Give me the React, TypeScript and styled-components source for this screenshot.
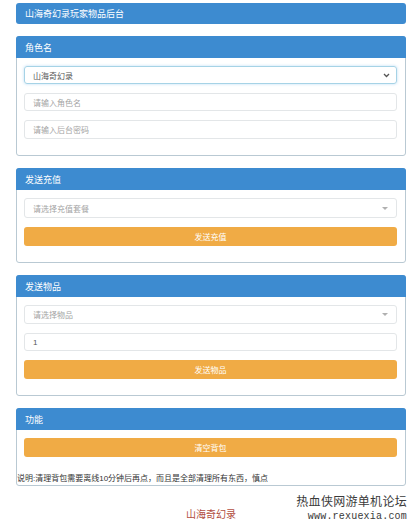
import styled, { createGlobalStyle } from 'styled-components';

const GlobalStyle = createGlobalStyle`
    html, body {
        margin: 0;
        padding: 0;
        background: #fff;
    }
    body {
        font-family: "Liberation Sans", "Noto Sans CJK SC", sans-serif;
        color: #333;
    }
`;

const Page = styled.div`
    position: relative;
    width: 415px;
    height: 525px;
    padding: 3px 9px 0 16px;
    box-sizing: border-box;
    overflow: hidden;
`;

const TopBar = styled.div`
    height: 21px;
    background: #3d8bd0;
    border-radius: 3px;
    color: #fff;
    font-size: 9px;
    display: flex;
    align-items: center;
    padding-left: 9px;
`;

const Panel = styled.div`
    margin-top: 12px;
    border: 1px solid #b9c9d3;
    border-radius: 3px;
    background: #fff;
`;

const PanelHeader = styled.div`
    height: 22px;
    margin: -1px -1px 0;
    background: #3d8bd0;
    border-radius: 3px 3px 0 0;
    color: #fff;
    font-size: 9px;
    display: flex;
    align-items: center;
    padding-left: 9px;
`;

const PanelBody = styled.div<{ $bottom?: number }>`
    display: flex;
    flex-direction: column;
    gap: 9px;
    padding: 8px 8px ${(p) => p.$bottom ?? 16}px 7px;
`;

const Field = styled.div<{ $focus?: boolean; $muted?: boolean; $h?: number }>`
    height: ${(p) => p.$h ?? 18}px;
    box-sizing: border-box;
    border: 1px solid ${(p) => (p.$focus ? '#a6d3e6' : '#e3e6e8')};
    box-shadow: ${(p) => (p.$focus ? '0 0 3px rgba(102, 175, 233, 0.45)' : 'none')};
    border-radius: 3px;
    display: flex;
    align-items: center;
    justify-content: space-between;
    padding: 0 6px 0 8px;
    font-size: 8px;
    color: ${(p) => (p.$muted ? '#a4a4a4' : '#555')};
`;

const Caret = styled.span`
    width: 0;
    height: 0;
    border-left: 3px solid transparent;
    border-right: 3px solid transparent;
    border-top: 3px solid #b0b0b0;
    margin-right: 2px;
`;

const Button = styled.div`
    height: 19px;
    border-radius: 3px;
    background: #f0ab45;
    color: #fff;
    font-size: 8px;
    display: flex;
    align-items: center;
    justify-content: center;
`;

const Note = styled.div`
    font-size: 8px;
    color: #333;
    margin: 6px -8px 0 -7px;
`;

const Footer = styled.div`
    margin-top: 20px;
    text-align: center;
    font-size: 10px;
    color: #b24d3f;
`;

const Watermark = styled.div`
    position: absolute;
    right: 8px;
    bottom: 3px;
    text-align: right;
    color: #3a3a3a;
    text-shadow: 0 0 1px #fff, 0 0 2px #fff;
    line-height: 1;
`;

const WatermarkTitle = styled.div`
    font-size: 12px;
    letter-spacing: 0.3px;
`;

const WatermarkUrl = styled.div`
    margin-top: 4px;
    font-family: "Liberation Mono", monospace;
    font-size: 10px;
    letter-spacing: 0.2px;
`;

function Chevron() {
    return (
        <svg width="7" height="5" viewBox="0 0 7 5">
            <path d="M1 1 L3.5 3.5 L6 1" fill="none" stroke="#555" strokeWidth="1.3" />
        </svg>
    );
}

export default function App() {
    return (
        <>
            <GlobalStyle />
            <Page>
                <TopBar>山海奇幻录玩家物品后台</TopBar>

                <Panel>
                    <PanelHeader>角色名</PanelHeader>
                    <PanelBody>
                        <Field $focus>
                            <span>山海奇幻录</span>
                            <Chevron />
                        </Field>
                        <Field $muted>请输入角色名</Field>
                        <Field $muted $h={19}>请输入后台密码</Field>
                    </PanelBody>
                </Panel>

                <Panel>
                    <PanelHeader>发送充值</PanelHeader>
                    <PanelBody>
                        <Field $muted $h={20}>
                            <span>请选择充值套餐</span>
                            <Caret />
                        </Field>
                        <Button>发送充值</Button>
                    </PanelBody>
                </Panel>

                <Panel>
                    <PanelHeader>发送物品</PanelHeader>
                    <PanelBody>
                        <Field $muted $h={19}>
                            <span>请选择物品</span>
                            <Caret />
                        </Field>
                        <Field>1</Field>
                        <Button>发送物品</Button>
                    </PanelBody>
                </Panel>

                <Panel>
                    <PanelHeader>功能</PanelHeader>
                    <PanelBody $bottom={2}>
                        <Button>清空背包</Button>
                        <Note>说明:清理背包需要离线10分钟后再点，而且是全部清理所有东西，慎点</Note>
                    </PanelBody>
                </Panel>

                <Footer>山海奇幻录</Footer>

                <Watermark>
                    <WatermarkTitle>热血侠网游单机论坛</WatermarkTitle>
                    <WatermarkUrl>www.rexuexia.com</WatermarkUrl>
                </Watermark>
            </Page>
        </>
    );
}
